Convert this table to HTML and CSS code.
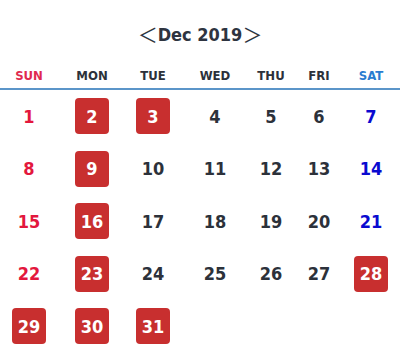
FILE: index.html
```html
<!DOCTYPE html>
<html>
<head>
<meta charset="utf-8">
<link rel="stylesheet" href="styles.css">
</head>
<body>
<div class="cal">
  <div class="title"><span class="arrow">＜</span>Dec 2019<span class="arrow">＞</span></div>
  <div class="week">
    <div class="wd sun">SUN</div><div class="wd">MON</div><div class="wd">TUE</div><div class="wd">WED</div><div class="wd">THU</div><div class="wd">FRI</div><div class="wd sat">SAT</div>
  </div>
  <div class="days">
    <div class="d sun">1</div><div class="d"><span class="on">2</span></div><div class="d"><span class="on">3</span></div><div class="d">4</div><div class="d">5</div><div class="d">6</div><div class="d sat">7</div>
    <div class="d sun">8</div><div class="d"><span class="on">9</span></div><div class="d">10</div><div class="d">11</div><div class="d">12</div><div class="d">13</div><div class="d sat">14</div>
    <div class="d sun">15</div><div class="d"><span class="on">16</span></div><div class="d">17</div><div class="d">18</div><div class="d">19</div><div class="d">20</div><div class="d sat">21</div>
    <div class="d sun">22</div><div class="d"><span class="on">23</span></div><div class="d">24</div><div class="d">25</div><div class="d">26</div><div class="d">27</div><div class="d sat"><span class="on">28</span></div>
    <div class="d sun"><span class="on">29</span></div><div class="d"><span class="on">30</span></div><div class="d"><span class="on">31</span></div><div class="d"></div><div class="d"></div><div class="d"></div><div class="d"></div>
  </div>
</div>
</body>
</html>
```
FILE: styles.css
```css
html, body { margin: 0; padding: 0; background: #fff; }
body { width: 400px; height: 350px; overflow: hidden; font-family: "DejaVu Sans Condensed", "DejaVu Sans", sans-serif; color: #2c313a; }
.cal { width: 400px; }
.title {
  height: 60px; display: flex; align-items: center; justify-content: center;
  font-size: 18px; font-weight: 700; color: #2e3440; padding-top: 8px; box-sizing: border-box;
}
.arrow { font-family: "Noto Sans CJK SC", sans-serif; font-weight: 400; font-size: 20px; }
.week, .days {
  display: grid;
  grid-template-columns: 58px 68px 54px 70px 42px 54px 50px;
}
.week { height: 28px; border-bottom: 2px solid #5b95c9; }
.wd { display: flex; align-items: center; justify-content: center; font-size: 13px; font-weight: 700; color: #2c313a; padding-top: 2px; }
.wd.sun { color: #e0294e; }
.wd.sat { color: #2a7cd0; }
.days { grid-auto-rows: 52.5px; }
.d { display: flex; align-items: center; justify-content: center; font-size: 18px; font-weight: 700; color: #2c313a; }
.d.sun { color: #e3173d; }
.d.sat { color: #0a0ad0; }
.on {
  display: flex; align-items: center; justify-content: center;
  width: 34px; height: 36px; border-radius: 4px; background: #c82f2f; color: #fff;
}
```
